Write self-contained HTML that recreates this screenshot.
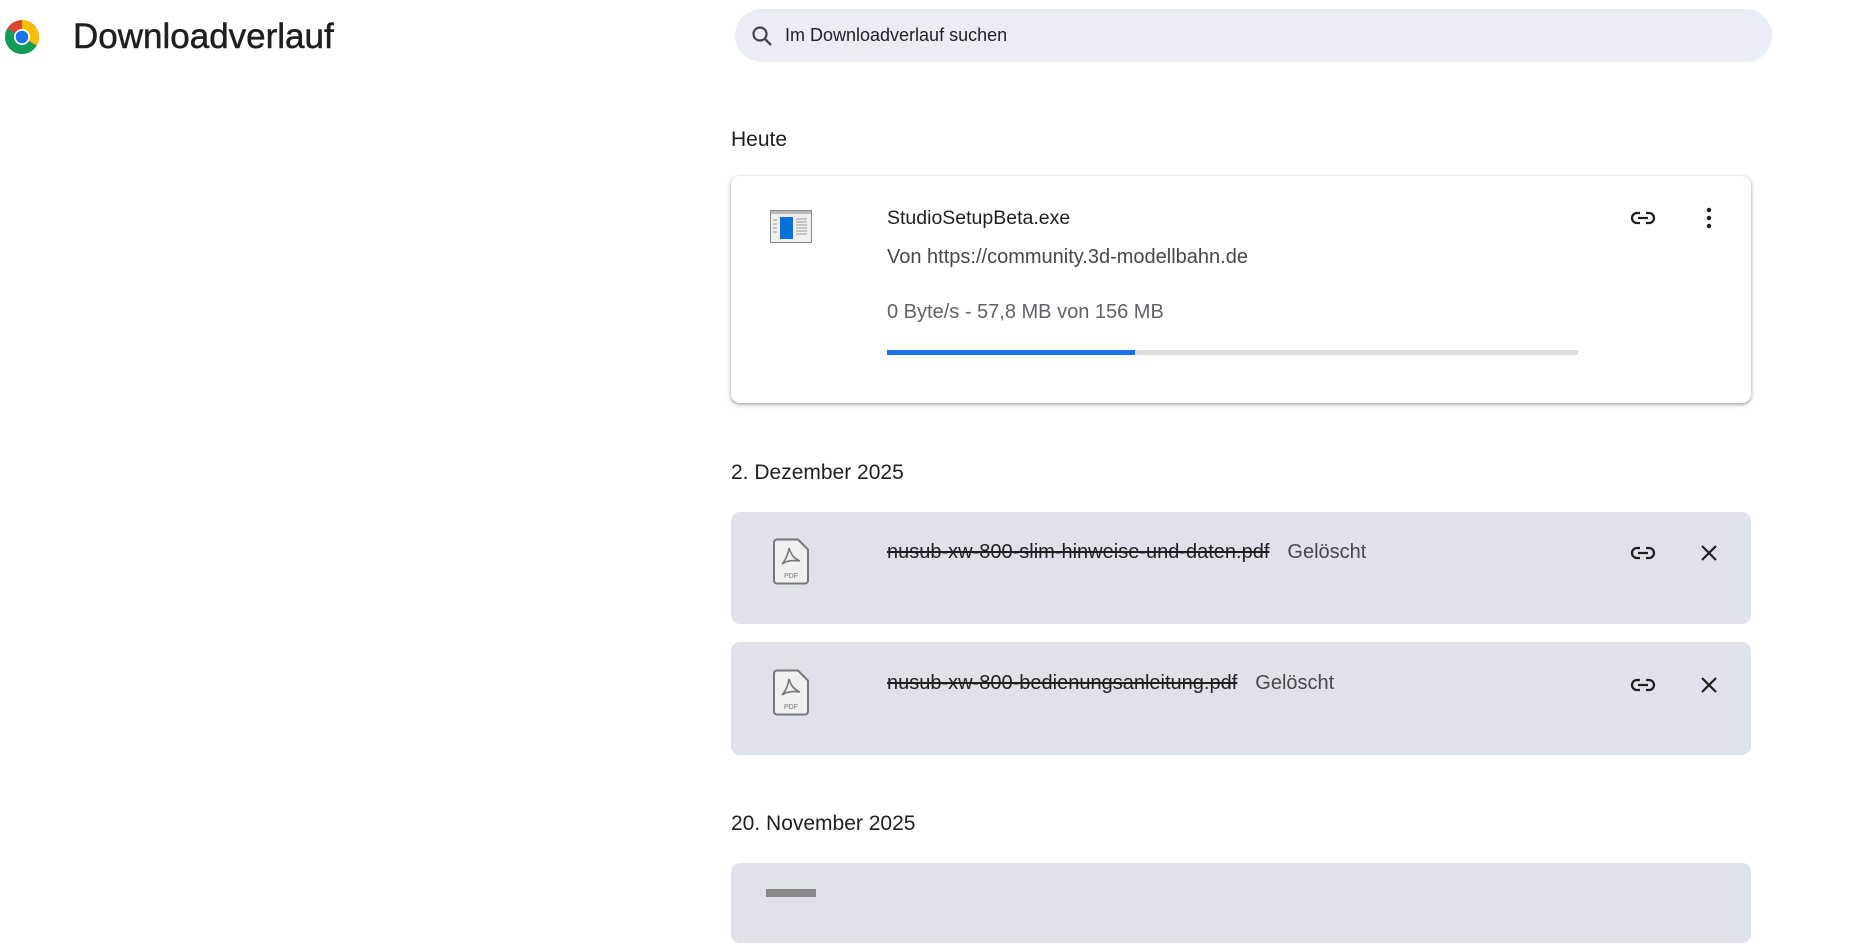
<!DOCTYPE html>
<html><head><meta charset="utf-8"><style>
body{margin:0;width:1864px;height:895px;overflow:hidden;background:#fff;font-family:"Liberation Sans",sans-serif;color:#1f1f1f;position:relative}
.a{position:absolute}
.search{left:735px;top:9px;width:1037px;height:53px;border-radius:27px;background:#e9edf6}
.h{font-size:21px;color:#1f1f1f}
.card{left:731px;width:1020px;border-radius:9px}
.c1{top:176px;height:227px;background:#fff;box-shadow:0 1px 3px rgba(0,0,0,.3),0 2px 6px rgba(0,0,0,.15)}
.cg{background:#dee3eb}
.name{font-size:19.5px;color:#1f1f1f}
.sub{font-size:20px;color:#474747}
</style></head><body>
<svg class="a" style="left:5px;top:20px" width="34" height="34" viewBox="0 0 34 34">
<circle cx="17" cy="17" r="17" fill="#db4437"/>
<path d="M17 17 L31.7 25.5 A17 17 0 0 1 2.3 25.5 Z" fill="#0f9d58"/>
<path d="M17 17 L17 0 A17 17 0 0 1 31.7 25.5 Z" fill="#fbbc05"/>
<path d="M17 17 L2.3 25.5 A17 17 0 0 1 2.3 8.5 Z" fill="#0f9d58"/>
<circle cx="17" cy="17" r="8" fill="#fff"/><circle cx="17" cy="17" r="6.3" fill="#1a73e8"/></svg>
<div class="a" style="left:73px;top:17px;font-size:35px;color:#1f1f1f;-webkit-text-stroke:0.5px #1f1f1f">Downloadverlauf</div>
<div class="a search"></div>
<svg class="a" style="left:750px;top:24px" width="24" height="24" viewBox="0 0 24 24"><circle cx="10" cy="10" r="6.5" fill="none" stroke="#444" stroke-width="2.2"/><path d="M15 15l6 6" stroke="#444" stroke-width="2.4"/></svg>
<div class="a" style="left:785px;top:25px;font-size:18px;color:#1f1f1f">Im Downloadverlauf suchen</div>
<div class="a h" style="left:731px;top:128px">Heute</div>
<div class="a card c1"></div>
<svg class="a" style="left:770px;top:210px" width="42" height="33" viewBox="0 0 42 33"><rect x="0.5" y="0.5" width="41" height="32" fill="#f0f0f0" stroke="#888"/><rect x="1" y="1" width="40" height="3" fill="#bbb"/><rect x="10" y="7" width="13" height="22" fill="#0a6fd6"/><g stroke="#999" stroke-width="1"><path d="M26 9h11M26 12h11M26 15h11M26 18h11M26 21h11M26 24h11M3 10h4M3 14h4M3 18h4M3 22h4"/></g></svg>
<div class="a name" style="left:887px;top:207px">StudioSetupBeta.exe</div>
<div class="a sub" style="left:887px;top:246px">Von https://community.3d-modellbahn.de</div>
<div class="a sub" style="left:887px;top:301px;color:#5f6368">0 Byte/s - 57,8 MB von 156 MB</div>
<div class="a" style="left:887px;top:350px;width:691px;height:5px;background:#dcdcdc"></div>
<div class="a" style="left:887px;top:350px;width:248px;height:5px;background:#1a73e8"></div>
<svg class="a" style="left:1630px;top:206px" width="26" height="24" viewBox="0 0 26 24"><path d="M10 7H7a5 5 0 0 0 0 10h3M16 7h3a5 5 0 0 1 0 10h-3M8 12h10" fill="none" stroke="#1f1f1f" stroke-width="2.3"/></svg>
<svg class="a" style="left:1704px;top:206px" width="10" height="24" viewBox="0 0 10 24"><circle cx="5" cy="4" r="2.2" fill="#1f1f1f"/><circle cx="5" cy="12" r="2.2" fill="#1f1f1f"/><circle cx="5" cy="20" r="2.2" fill="#1f1f1f"/></svg>

<div class="a h" style="left:731px;top:461px">2. Dezember 2025</div>
<div class="a card cg" style="top:512px;height:112px"></div>
<div class="a card cg" style="top:642px;height:113px"></div>
<div class="a card cg" style="top:863px;height:80px"></div>
<div class="a" style="left:766px;top:889px;width:50px;height:8px;background:#888"></div>

<svg class="a" style="left:773px;top:538px" width="37" height="47" viewBox="0 0 37 47"><path d="M4 1.5h21l10 10v31a3 3 0 0 1-3 3H4a3 3 0 0 1-3-3v-38a3 3 0 0 1 3-3z" fill="#eef0f3" stroke="#777" stroke-width="2"/><path d="M16 10c2 6 4 10 11 13M16 10c-1 8-5 14-7 16M9 26c4-3 10-4 17-3" fill="none" stroke="#777" stroke-width="1.6"/><text x="18" y="40" font-size="7" fill="#777" text-anchor="middle" font-family="Liberation Sans">PDF</text></svg>
<svg class="a" style="left:773px;top:669px" width="37" height="47" viewBox="0 0 37 47"><path d="M4 1.5h21l10 10v31a3 3 0 0 1-3 3H4a3 3 0 0 1-3-3v-38a3 3 0 0 1 3-3z" fill="#eef0f3" stroke="#777" stroke-width="2"/><path d="M16 10c2 6 4 10 11 13M16 10c-1 8-5 14-7 16M9 26c4-3 10-4 17-3" fill="none" stroke="#777" stroke-width="1.6"/><text x="18" y="40" font-size="7" fill="#777" text-anchor="middle" font-family="Liberation Sans">PDF</text></svg>

<div class="a" style="left:887px;top:541px;font-size:20px"><s>nusub-xw-800-slim-hinweise-und-daten.pdf</s><span style="color:#474747;margin-left:18px">Gelöscht</span></div>
<div class="a" style="left:887px;top:672px;font-size:20px"><s>nusub-xw-800-bedienungsanleitung.pdf</s><span style="color:#474747;margin-left:18px">Gelöscht</span></div>

<svg class="a" style="left:1630px;top:541px" width="26" height="24" viewBox="0 0 26 24"><path d="M10 7H7a5 5 0 0 0 0 10h3M16 7h3a5 5 0 0 1 0 10h-3M8 12h10" fill="none" stroke="#1f1f1f" stroke-width="2.3"/></svg>
<svg class="a" style="left:1699px;top:543px" width="20" height="20" viewBox="0 0 20 20"><path d="M3 3l14 14M17 3L3 17" stroke="#1f1f1f" stroke-width="2.2"/></svg>
<svg class="a" style="left:1630px;top:673px" width="26" height="24" viewBox="0 0 26 24"><path d="M10 7H7a5 5 0 0 0 0 10h3M16 7h3a5 5 0 0 1 0 10h-3M8 12h10" fill="none" stroke="#1f1f1f" stroke-width="2.3"/></svg>
<svg class="a" style="left:1699px;top:675px" width="20" height="20" viewBox="0 0 20 20"><path d="M3 3l14 14M17 3L3 17" stroke="#1f1f1f" stroke-width="2.2"/></svg>

<div class="a h" style="left:731px;top:812px">20. November 2025</div>
</body></html>
